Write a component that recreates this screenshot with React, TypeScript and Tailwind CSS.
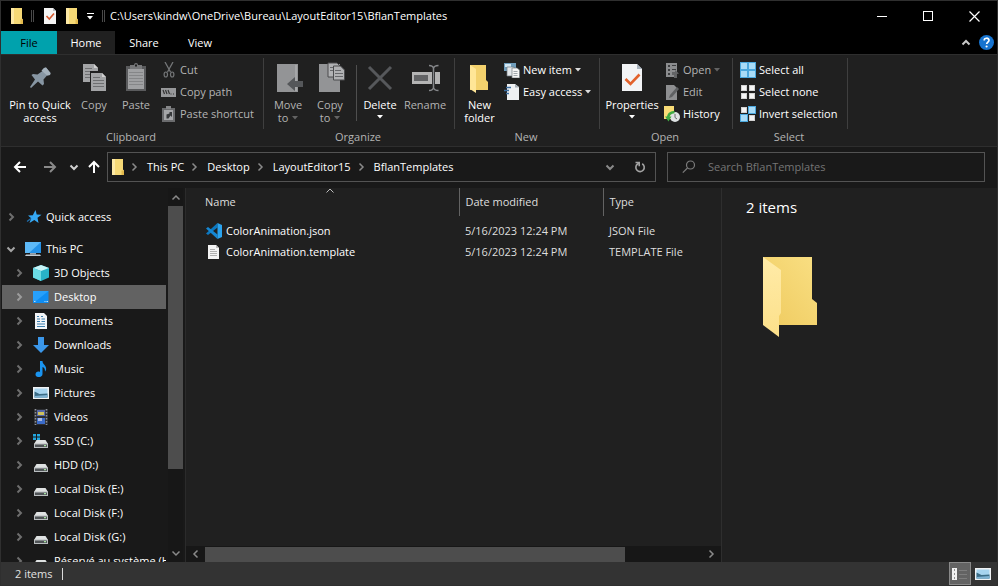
import type { ReactNode } from "react";

/* ---------- icons ---------- */

type Dir = "up" | "down" | "left" | "right";

const chevronPaths: Record<Dir, string> = {
  up: "M1.5 6.5L5 3l3.5 3.5",
  down: "M1.5 3.5L5 7l3.5-3.5",
  left: "M6.5 1.5L3 5l3.5 3.5",
  right: "M3.5 1.5L7 5 3.5 8.5",
};

function Chevron({ dir, className = "text-[#8a8a8a]", stroke = 2 }: { dir: Dir; className?: string; stroke?: number }) {
  return (
    <svg width="10" height="10" viewBox="0 0 10 10" className={`shrink-0 ${className}`} fill="none" stroke="currentColor" strokeWidth={stroke}>
      <path d={chevronPaths[dir]} />
    </svg>
  );
}

function Caret({ className = "text-white" }: { className?: string }) {
  return (
    <svg width="6" height="4" viewBox="0 0 6 4" className={`shrink-0 ${className}`} fill="currentColor">
      <path d="M0 0h6L3 3.5z" />
    </svg>
  );
}

function SmallFolder() {
  return (
    <svg width="12" height="16" viewBox="2 0 12 16" className="shrink-0">
      <path d="M2 0h11v10.5l1 1V16H2z" fill="#f6d976" />
      <path d="M2 0h3v16H2z" fill="#fde9a5" />
      <path d="M11.5 11.5H14V16h-2.5z" fill="#e3b94d" />
    </svg>
  );
}

function SmallCheckDoc() {
  return (
    <svg width="12" height="16" viewBox="2 0 12 16" className="shrink-0">
      <path d="M2 0h9l3 3v13H2z" fill="#f4f4f4" />
      <path d="M11 0v3h3z" fill="#b9bec4" />
      <path d="M4.5 8l2.8 3L12 5.5" fill="none" stroke="#d6592f" strokeWidth="1.6" />
    </svg>
  );
}

function BigIcon({ children }: { children: ReactNode }) {
  return (
    <svg width="32" height="32" viewBox="0 0 32 32" className="shrink-0">
      {children}
    </svg>
  );
}

function SmallIcon({ children }: { children: ReactNode }) {
  return (
    <svg width="16" height="16" viewBox="0 0 16 16" className="shrink-0">
      {children}
    </svg>
  );
}

const pinIcon = (
  <BigIcon>
    <path d="M20 6l2-.5L26.5 11l-.5 2-3 .5-3.500 4 .5 4.500-1.500 1.500-4.500-4L7 26l-1-1 5-7.500L7.500 13 9 12l4.500.5 5-3.500z" fill="#8796a3" />
    <path d="M20 6l2-.5L26.500 11l-.5 2-3 .5-5.500-5 1-1z" fill="#a4b1bc" />
  </BigIcon>
);

const page = (x: number, y: number) => (
  <g transform={`translate(${x} ${y})`}>
    <path d="M0 0h11l4 4v14H0z" fill="#a3a4a6" />
    <path d="M11 0v4h4z" fill="#d0d0d0" />
    <path d="M2 4.500h7M2 7.500h11M2 10.500h11M2 13.500h11" stroke="#6e6f71" />
  </g>
);

const copyIcon = (
  <BigIcon>
    {page(5, 2)}
    <path d="M12 9h13l4 5v16H12z" fill="#202020" />
    {page(13, 11)}
  </BigIcon>
);

const pasteIcon = (
  <BigIcon>
    <path d="M6 4h20v25H6z" fill="#5a5b5d" />
    <path d="M8 7h16v20H8z" fill="#a0a1a3" />
    <path d="M10 3h4a2 2 0 0 1 4 0h4v4H10z" fill="#77787a" />
    <path d="M15 2.500h2v2h-2z" fill="#202020" />
    <path d="M9 10.500h14M9 13.500h14M9 16.500h14M9 19.500h14M9 22.500h14" stroke="#858688" />
  </BigIcon>
);

const moveIcon = (
  <BigIcon>
    <path d="M5 2h21v28H5z" fill="#939496" />
    <path d="M23 3h2v26h-2z" fill="#a5a6a8" />
    <path d="M15 22l8-7v4h8v6h-8v4z" fill="#55575a" />
  </BigIcon>
);

const copyToIcon = (
  <BigIcon>
    <path d="M5 2h21v28H5z" fill="#939496" />
    <path d="M14 1h9l3 3v11H14z" fill="#b0b1b3" stroke="#4a4b4d" />
    <path d="M16 5.500h7M16 8.500h7" stroke="#66676a" />
    <path d="M19.500 4h7l4 4v10h-11z" fill="#b0b1b3" stroke="#4a4b4d" />
    <path d="M21 8.500h6M21 11.500h8M21 14.500h8" stroke="#66676a" />
  </BigIcon>
);

const deleteIcon = (
  <BigIcon>
    <path d="M5 5l22 22M27 5L5 27" stroke="#56585b" strokeWidth="3" />
  </BigIcon>
);

const renameIcon = (
  <BigIcon>
    <path d="M3 10h20v12H3zM26 10h5v12h-5z" fill="#b4b4b4" />
    <path d="M5 13h14v6H5z" fill="#626365" />
    <path d="M20 3.500q4 0 4.500 3 .5-3 5-3M24.500 6v21M20 28.500q4 0 4.500-3 .5 3 5 3" fill="none" stroke="#85878a" strokeWidth="1.500" />
  </BigIcon>
);

const newFolderIcon = (
  <BigIcon>
    <path d="M6 3h16v15l2 2v8H6z" fill="#f3d16d" />
    <path d="M6 3l6 4v24l-6-4z" fill="#ffe697" />
  </BigIcon>
);

const propertiesIcon = (
  <BigIcon>
    <path d="M6 2h15l5 5v22H6z" fill="#f2f4f6" />
    <path d="M21 2v5h5z" fill="#a9b4bf" />
    <path d="M9.500 17l5 5 9-9.500" fill="none" stroke="#e2622c" strokeWidth="2.600" />
  </BigIcon>
);

const cutIcon = (
  <SmallIcon>
    <path d="M4 0l5.500 10M12 0L6.500 10" stroke="#747678" strokeWidth="1.300" />
    <g fill="none" stroke="#747678" strokeWidth="1.200">
      <ellipse cx="4.800" cy="12.500" rx="1.700" ry="2.500" />
      <ellipse cx="11.200" cy="12.500" rx="1.700" ry="2.500" />
    </g>
  </SmallIcon>
);

const copyPathIcon = (
  <SmallIcon>
    <path d="M0 4h15v9H0z" fill="#97989a" />
    <path d="M2 6l1.500 4M4.500 6L6 10M7 6l1.500 4M9.500 10h1M12 10h1" stroke="#333" strokeWidth="1.200" />
  </SmallIcon>
);

const pasteShortcutIcon = (
  <SmallIcon>
    <path d="M1 2h13v14H1z" fill="#6a6b6d" />
    <path d="M3 4h9v10H3z" fill="#a5a6a8" />
    <path d="M5 0h5v3H5z" fill="#858688" />
    <path d="M5.500 12.500V8.500l3-1V6H11v5l-1.500-1.500L7.500 12.500z" fill="#37393b" />
  </SmallIcon>
);

const newItemIcon = (
  <SmallIcon>
    <path d="M0 1h12v8H0z" fill="#6f9dbb" />
    <path d="M1 2h6v3H1z" fill="#d3e7f3" />
    <path d="M3 5h7v9H3z" fill="#e4e8ec" stroke="#747c83" strokeWidth=".7" />
    <path d="M8 6h5l2.500 2v8H8z" fill="#f6f6f6" stroke="#747c83" strokeWidth=".7" />
    <path d="M9.500 9.500h4M9.500 11.500h4M9.500 13.500h4" stroke="#8d959c" strokeWidth=".8" />
  </SmallIcon>
);

const easyAccessIcon = (
  <SmallIcon>
    <path d="M3 0h8l4 3v13H3z" fill="#eef0f2" />
    <path d="M11 0v3.500h4z" fill="#a4adb5" />
    <path d="M2 3.500h5M0 6.500h5M2 9.500h3" stroke="#3c6ea0" strokeWidth="1.300" />
  </SmallIcon>
);

const openIcon = (
  <SmallIcon>
    <path d="M2 1h11v14H2z" fill="#8b8c8e" />
    <path d="M4 3h2v2H4zM4 7h2v2H4zM4 11h2v2H4zM8 3h4v1H8zM8 7h4v1H8z" fill="#3c3d3f" />
    <path d="M8 10h3V8l4 3.500-2 .5v4h-3v-3H8z" fill="#626365" />
  </SmallIcon>
);

const editIcon = (
  <SmallIcon>
    <path d="M2 1h8l3 3v12H2z" fill="#8e8f91" />
    <path d="M5 14l1-3 7-8 2 2-7 8z" fill="#5f6163" />
  </SmallIcon>
);

const historyIcon = (
  <SmallIcon>
    <path d="M0 0h10v13H0z" fill="#f9dc77" />
    <circle cx="11" cy="11" r="5" fill="#dfe3e4" />
    <path d="M11 8v3.500l2 1.500" fill="none" stroke="#666" strokeWidth="1" />
    <path d="M4 12.500q0-6 6.500-6.500" fill="none" stroke="#3faa42" strokeWidth="2.600" />
    <path d="M1 10.500h6.500l-3 5z" fill="#3faa42" />
  </SmallIcon>
);

const squares = [
  [0, 0],
  [8, 0],
  [0, 8],
  [8, 8],
];

function SelectIcon({ on }: { on: boolean[] }) {
  return (
    <SmallIcon>
      {squares.map(([x, y], i) =>
        on[i] ? (
          <rect key={i} x={x + 0.5} y={y + 0.5} width="7" height="7" fill="#a9dcf8" stroke="#4ba8de" />
        ) : (
          <rect key={i} x={x + 1.5} y={y + 1.5} width="5" height="5" fill="#f5f5f5" stroke="#d2d2d2" />
        ),
      )}
    </SmallIcon>
  );
}

const starIcon = (
  <SmallIcon>
    <path d="M9.500 1l1.200 4.500 4.800.3-4 2.900 1 5.300-4.200-3L3.500 14l1.700-4.800L2 6.500l4.800-.3z" fill="#35a9f5" />
    <path d="M1 12.500l4-3" stroke="#1f6fae" strokeWidth="1.300" />
  </SmallIcon>
);

const pcIcon = (
  <SmallIcon>
    <path d="M0 1h16v11H0z" fill="#2492e8" />
    <path d="M0 1h16L4 12H0z" fill="#5db9f7" />
    <path d="M5 12h6v1.500H5z" fill="#98a5b0" />
    <path d="M1 13.500h14l1 1.500H0z" fill="#c3ccd3" />
  </SmallIcon>
);

const cubeIcon = (
  <SmallIcon>
    <path d="M8 0l8 3v9.500L8 16l-8-3.500V3z" fill="#28b2c8" />
    <path d="M8 0l8 3-8 3-8-3z" fill="#c9f4f7" />
    <path d="M0 3l8 3v10l-8-3.500z" fill="#6bdbe4" />
  </SmallIcon>
);

const desktopIcon = (
  <SmallIcon>
    <path d="M0 2h15.500v12H0z" fill="#0f8df2" />
    <path d="M0 2h15.500L3 12H0z" fill="#27a0fb" />
    <path d="M1 12.500h14" stroke="#bfe1fb" strokeDasharray="1.500 9 1 1" />
  </SmallIcon>
);

const documentsIcon = (
  <SmallIcon>
    <path d="M2 0h9l3 3v13H2z" fill="#f3f5f7" />
    <path d="M4 3.500h2M8 3.500h2M4 6h3M8.500 6H12M4 8.500h3M8.500 8.500H12M4 11h8M4 13.500h8" stroke="#3c7fae" strokeWidth="1.200" />
  </SmallIcon>
);

const downloadsIcon = (
  <SmallIcon>
    <path d="M5 0h6v8h5l-8 8-8-8h5z" fill="#3b97ea" />
  </SmallIcon>
);

const musicIcon = (
  <SmallIcon>
    <path d="M7 0h2.500c0 4 4.500 4 3.500 9-.2.8-1 1.500-1 1.500 0-3-1-4-2.500-4.500V13c0 4-7 4-7 .5C2.500 11 5 10 7 11z" fill="#1a94f0" />
  </SmallIcon>
);

const picturesIcon = (
  <SmallIcon>
    <path d="M0 2h16v12H0z" fill="#f0f2f4" />
    <path d="M1.500 3.500h13v9h-13z" fill="#a7d4ef" />
    <path d="M1.500 6.500l5 2.500 8-.5v4h-13z" fill="#3b6c86" />
    <path d="M1.500 11l13-1v2.500h-13z" fill="#7fb3d4" />
  </SmallIcon>
);

const videosIcon = (
  <SmallIcon>
    <path d="M1 0h14v16H1z" fill="#2c2e33" />
    <path d="M2.500 0v16M13.500 0v16" stroke="#8d9095" strokeWidth="1.500" strokeDasharray="1.500 1.500" />
    <path d="M4 1h8v6H4z" fill="#5667a8" />
    <path d="M5 3h6v3H5z" fill="#cfc15c" />
    <path d="M4 9h8v6H4z" fill="#3b6bc9" />
    <path d="M5 9h4v3H5z" fill="#a9b8dd" />
  </SmallIcon>
);

const diskBody = (
  <>
    <path d="M3.500 7h9L15 11H1z" fill="#dfe2e2" />
    <path d="M1 10.500h14V15H1z" fill="#b9bdbf" />
    <path d="M2 11.500h12V14H2z" fill="#4f5356" />
    <path d="M11 12h2v1.200h-2z" fill="#a6e3a0" />
  </>
);

const diskIcon = <SmallIcon>{diskBody}</SmallIcon>;

const systemDiskIcon = (
  <SmallIcon>
    {diskBody}
    <path d="M0 1h3v2.500H0zM4 1h3v2.500H4zM0 4.500h3V7H0zM4 4.500h3V7H4z" fill="#22a7e0" />
  </SmallIcon>
);

const vscodeIcon = (
  <SmallIcon>
    <path d="M11.500 0v4.500L2 12 0 10.500z" fill="#0c78c0" />
    <path d="M0 5.500L2 4l9.500 7.500V16z" fill="#1587d3" />
    <path d="M11.500 0L16 2v12l-4.500 2z" fill="#2ba3ee" />
  </SmallIcon>
);

const textFileIcon = (
  <SmallIcon>
    <path d="M2 1h8l3 3v11H2z" fill="#f4f4f4" />
    <path d="M10 1v3h3z" fill="#bdbdbd" />
    <path d="M4 5.500h5M4 7.500h7M4 9.500h7M4 11.500h7" stroke="#a8a8a8" strokeWidth=".9" />
  </SmallIcon>
);

/* ---------- data ---------- */

const places = [
  { name: "3D Objects", icon: cubeIcon },
  { name: "Desktop", icon: desktopIcon, selected: true },
  { name: "Documents", icon: documentsIcon },
  { name: "Downloads", icon: downloadsIcon },
  { name: "Music", icon: musicIcon },
  { name: "Pictures", icon: picturesIcon },
  { name: "Videos", icon: videosIcon },
  { name: "SSD (C:)", icon: systemDiskIcon },
  { name: "HDD (D:)", icon: diskIcon },
  { name: "Local Disk (E:)", icon: diskIcon },
  { name: "Local Disk (F:)", icon: diskIcon },
  { name: "Local Disk (G:)", icon: diskIcon },
  { name: "Réservé au système (H:)", icon: diskIcon },
];

const crumbs = ["This PC", "Desktop", "LayoutEditor15", "BflanTemplates"];

const files = [
  { name: "ColorAnimation.json", date: "5/16/2023 12:24 PM", type: "JSON File", icon: vscodeIcon },
  { name: "ColorAnimation.template", date: "5/16/2023 12:24 PM", type: "TEMPLATE File", icon: textFileIcon },
];

/* ---------- title bar and tabs ---------- */

function TitleBar() {
  return (
    <header className="flex h-[30px] shrink-0 items-center bg-black pl-[10px] text-white">
      <SmallFolder />
      <span className="mx-2 h-3 w-[3px] border-x border-[#4a4a4a]" />
      <button aria-label="Properties" className="ml-[2px]">
        <SmallCheckDoc />
      </button>
      <button aria-label="New folder" className="ml-[10px]">
        <SmallFolder />
      </button>
      <button aria-label="Customize Quick Access Toolbar" className="ml-2 flex w-2 flex-col items-center gap-[2px]">
        <span className="h-px w-[7px] bg-white" />
        <Caret />
      </button>
      <span className="mr-[5px] ml-2 h-3 w-[3px] border-x border-[#4a4a4a]" />
      <h1 className="min-w-0 flex-1 truncate">
        C:\Users\kindw\OneDrive\Bureau\LayoutEditor15\BflanTemplates
      </h1>
      <button aria-label="Minimize" className="flex h-full w-[46px] items-center justify-center">
        <span className="h-px w-[10px] bg-white" />
      </button>
      <button aria-label="Maximize" className="flex h-full w-[46px] items-center justify-center">
        <span className="size-[10px] border border-white" />
      </button>
      <button aria-label="Close" className="flex h-full w-[46px] items-center justify-center">
        <svg width="11" height="11" viewBox="0 0 11 11" stroke="white" strokeWidth="1.200">
          <path d="M.5.500l10 10M10.500.500l-10 10" />
        </svg>
      </button>
    </header>
  );
}

function Tabs() {
  return (
    <nav className="flex h-[23px] shrink-0 bg-black text-white">
      <button className="w-14 bg-[#00a2ad] text-black">File</button>
      <button className="w-[58px] bg-[#202020]">Home</button>
      <button className="w-[58px]">Share</button>
      <button className="w-[54px]">View</button>
      <span className="flex-1" />
      <button aria-label="Minimize the Ribbon" className="px-2">
        <Chevron dir="up" className="text-[#c8c8c8]" />
      </button>
      <button aria-label="Help" className="mr-[3px] flex items-center">
        <svg width="15" height="15" viewBox="0 0 15 15">
          <circle cx="7.500" cy="7.500" r="7.500" fill="#1673cf" />
          <path d="M5.200 5.500c0-3 4.800-3 4.800-.2 0 1.600-2.300 1.900-2.300 3.700" fill="none" stroke="white" strokeWidth="1.700" />
          <circle cx="7.600" cy="11.500" r="1.100" fill="white" />
        </svg>
      </button>
    </nav>
  );
}

/* ---------- ribbon ---------- */

function Group({ label, className, children }: { label: string; className: string; children: ReactNode }) {
  return (
    <section aria-label={label} className={`flex shrink-0 flex-col ${className}`}>
      <div className="flex h-[71px] border-r border-[#3f3f3f]">{children}</div>
      <div className="pr-[3px] text-center leading-4 text-[#b4b4b4]">{label}</div>
    </section>
  );
}

type BigProps = { icon: ReactNode; lines: string[]; className: string; caret?: "inline" | "below"; dim?: boolean };

function BigButton({ icon, lines, className, caret, dim }: BigProps) {
  return (
    <button className={`flex shrink-0 flex-col items-center pt-1 leading-[13px] whitespace-nowrap ${dim ? "text-[#b4b4b4]" : "text-white"} ${className}`}>
      {icon}
      <span className="mt-1">{lines[0]}</span>
      {lines[1] && (
        <span className="flex items-center gap-1">
          {lines[1]}
          {caret === "inline" && <Caret className="text-[#636363]" />}
        </span>
      )}
      {caret === "below" && (
        <span className="pt-1">
          <Caret />
        </span>
      )}
    </button>
  );
}

function SmallButton({ icon, label, caret, dim }: { icon: ReactNode; label: string; caret?: boolean; dim?: boolean }) {
  return (
    <button className={`flex h-[22px] items-center gap-[3px] whitespace-nowrap ${dim ? "text-[#b4b4b4]" : "text-white"}`}>
      {icon}
      {label}
      {caret && <Caret className={dim ? "text-[#636363]" : "text-[#dcdcdc]"} />}
    </button>
  );
}

function Ribbon() {
  return (
    <div className="flex shrink-0 border-t border-b border-[#2e2e2e] bg-[#202020] pt-[3px] pb-px">
      <Group label="Clipboard" className="w-[263px]">
        <BigButton icon={pinIcon} lines={["Pin to Quick", "access"]} className="w-[76px] pl-[2px]" />
        <BigButton icon={copyIcon} lines={["Copy"]} className="w-[34px]" dim />
        <BigButton icon={pasteIcon} lines={["Paste"]} className="w-[50px]" dim />
        <div className="pt-px">
          <SmallButton icon={cutIcon} label="Cut" dim />
          <SmallButton icon={copyPathIcon} label="Copy path" dim />
          <SmallButton icon={pasteShortcutIcon} label="Paste shortcut" dim />
        </div>
      </Group>
      <Group label="Organize" className="w-[191px]">
        <BigButton icon={moveIcon} lines={["Move", "to"]} caret="inline" className="w-12" dim />
        <BigButton icon={copyToIcon} lines={["Copy", "to"]} caret="inline" className="w-9" dim />
        <span className="mt-[7px] ml-[8px] h-14 w-px bg-[#4f4f4f]" />
        <BigButton icon={deleteIcon} lines={["Delete"]} caret="below" className="w-[46px]" />
        <BigButton icon={renameIcon} lines={["Rename"]} className="w-[44px]" dim />
      </Group>
      <Group label="New" className="w-[145px]">
        <BigButton icon={newFolderIcon} lines={["New", "folder"]} className="w-[49px]" />
        <div className="pt-px">
          <SmallButton icon={newItemIcon} label="New item" caret />
          <SmallButton icon={easyAccessIcon} label="Easy access" caret />
        </div>
      </Group>
      <Group label="Open" className="w-[133px]">
        <BigButton icon={propertiesIcon} lines={["Properties"]} caret="below" className="w-16" />
        <div className="pt-px">
          <SmallButton icon={openIcon} label="Open" caret dim />
          <SmallButton icon={editIcon} label="Edit" dim />
          <SmallButton icon={historyIcon} label="History" />
        </div>
      </Group>
      <Group label="Select" className="w-[115px]">
        <div className="pt-px pl-[7px]">
          <SmallButton icon={<SelectIcon on={[true, true, true, true]} />} label="Select all" />
          <SmallButton icon={<SelectIcon on={[false, false, false, false]} />} label="Select none" />
          <SmallButton icon={<SelectIcon on={[false, true, true, false]} />} label="Invert selection" />
        </div>
      </Group>
    </div>
  );
}

/* ---------- address row ---------- */

const arrowPaths = {
  Back: "M13 7H2M7 2L2 7l5 5",
  Forward: "M1 7h11M7 2l5 5-5 5",
  Up: "M7 13V2M2 7l5-5 5 5",
};

function NavArrow({ name, className }: { name: keyof typeof arrowPaths; className: string }) {
  return (
    <button aria-label={name} className={className}>
      <svg width="14" height="14" viewBox="0 0 14 14" fill="none" stroke="currentColor" strokeWidth="2">
        <path d={arrowPaths[name]} />
      </svg>
    </button>
  );
}

function AddressRow() {
  return (
    <div className="flex shrink-0 items-center bg-[#191919] px-3 pt-[5px] pb-[6px] text-white">
      <NavArrow name="Back" className="text-white" />
      <NavArrow name="Forward" className="ml-4 text-[#8a8a8a]" />
      <button aria-label="Recent locations" className="ml-3">
        <Chevron dir="down" className="text-[#d0d0d0]" />
      </button>
      <NavArrow name="Up" className="ml-2 text-white" />
      <div className="ml-[6px] flex h-[30px] min-w-0 flex-1 items-center border border-[#535353] pl-1">
        <SmallFolder />
        {crumbs.map((crumb) => (
          <span key={crumb} className="flex items-center whitespace-nowrap">
            <Chevron dir="right" stroke={1.5} className="mr-2 ml-[5px] text-[#8a8a8a]" />
            <button>{crumb}</button>
          </span>
        ))}
        <span className="flex-1" />
        <button aria-label="Previous locations" className="pr-[10px] pl-3">
          <Chevron dir="down" />
        </button>
        <button aria-label="Refresh" className="flex w-[30px] items-center justify-center self-stretch">
          <svg width="12" height="12" viewBox="0 0 12 12" fill="none" stroke="#a2a2a2" strokeWidth="1.600">
            <path d="M8.200 2.800a4.200 4.200 0 1 1-4.600.2L5 1.800" />
            <path d="M1.500 1.500h3.700v3.700" />
          </svg>
        </button>
      </div>
      <label className="ml-[11px] flex h-[30px] w-[318px] items-center border border-[#535353]">
        <svg width="14" height="14" viewBox="0 0 14 14" className="mr-3 ml-[14px] shrink-0" fill="none" stroke="#7c7c7c" strokeWidth="1.200">
          <circle cx="8.500" cy="5" r="4" />
          <path d="M5.500 8L.8 12.700" />
        </svg>
        <input
          aria-label="Search BflanTemplates"
          placeholder="Search BflanTemplates"
          className="min-w-0 flex-1 bg-transparent outline-none placeholder:text-[#757575]"
        />
      </label>
    </div>
  );
}

/* ---------- panes ---------- */

function Sidebar() {
  return (
    <aside className="flex w-[185px] shrink-0 border-r border-[#2b2b2b] bg-[#191919] text-white">
      <ul className="min-w-0 flex-1 overflow-hidden pt-[17px] pl-px">
        <li className="mb-2">
          <button className="flex h-6 items-center pl-1">
            <Chevron dir="right" className="text-[#6e6e6e]" />
            <span className="mr-1 ml-[10px]">{starIcon}</span>
            Quick access
          </button>
        </li>
        <li>
          <button className="flex h-6 items-center pl-1">
            <Chevron dir="down" className="text-[#a5a5a5]" />
            <span className="mr-[5px] ml-[9px]">{pcIcon}</span>
            This PC
          </button>
        </li>
        {places.map((place) => (
          <li key={place.name}>
            <button className={`flex h-6 w-full items-center pl-3 whitespace-nowrap ${place.selected ? "bg-[#626262]" : ""}`}>
              <Chevron dir="right" className={place.selected ? "text-[#9c9c9c]" : "text-[#6e6e6e]"} />
              <span className="mr-[5px] ml-[9px] shrink-0">{place.icon}</span>
              {place.name}
            </button>
          </li>
        ))}
      </ul>
      <div className="mr-[2px] ml-[2px] flex w-[15px] shrink-0 flex-col items-center justify-between bg-[#171717] pt-[5px] pb-1">
        <Chevron dir="up" stroke={1.5} />
        <div className="mt-[3px] mb-auto h-[72%] w-full bg-[#4d4d4d]" />
        <Chevron dir="down" stroke={1.5} />
      </div>
    </aside>
  );
}

function FileList() {
  return (
    <main className="flex min-w-0 flex-1 flex-col bg-[#202020]">
      <table className="w-full table-fixed border-collapse text-left">
        <colgroup>
          <col className="w-[273px]" />
          <col className="w-36" />
          <col />
        </colgroup>
        <thead>
          <tr className="h-7 text-[#dedede]">
            <th scope="col" className="relative border-r border-[#636363] pl-[19px] font-normal">
              Name
              <span className="absolute -top-[2px] left-[139px]">
                <Chevron dir="up" stroke={1} className="text-[#bdbdbd]" />
              </span>
            </th>
            <th scope="col" className="border-r border-[#636363] pl-[6px] font-normal">Date modified</th>
            <th scope="col" className="pl-[6px] font-normal">Type</th>
          </tr>
        </thead>
        <tbody className="before:block before:h-1">
          {files.map((file) => (
            <tr key={file.name} className="h-[21px]">
              <td className="pl-5 text-white">
                <span className="flex items-center gap-1">
                  {file.icon}
                  {file.name}
                </span>
              </td>
              <td className="pl-[6px] text-[#dedede]">{file.date}</td>
              <td className="pl-[6px] text-[#dedede]">{file.type}</td>
            </tr>
          ))}
        </tbody>
      </table>
      <div className="mt-auto flex h-4 items-center justify-between bg-[#171717] px-[5px]">
        <Chevron dir="left" stroke={1.5} />
        <div className="mr-auto ml-1 h-[15px] w-[80%] bg-[#4d4d4d]" />
        <Chevron dir="right" stroke={1.5} />
      </div>
    </main>
  );
}

function DetailsPane() {
  return (
    <aside className="w-[276px] shrink-0 border-l border-[#2e2e2e] bg-[#202020] pt-[9px] pl-6 text-white">
      <h2 className="text-[15px] leading-5">2 items</h2>
      <svg width="56" height="82" viewBox="0 0 56 82" className="mt-[39px] ml-4">
        <defs>
          <linearGradient id="folderBack" x1="0" y1="1" x2="1" y2="0">
            <stop offset="0" stopColor="#efca5e" />
            <stop offset="1" stopColor="#f9df83" />
          </linearGradient>
          <linearGradient id="folderFront" x1="0" y1="0" x2="0" y2="1">
            <stop offset="0" stopColor="#ffeba8" />
            <stop offset="1" stopColor="#fce08a" />
          </linearGradient>
        </defs>
        <path d="M1 1h49v42l5 4v22H1z" fill="url(#folderBack)" />
        <path d="M1 1l18 13v43l-2 3v21L1 69z" fill="url(#folderFront)" />
      </svg>
    </aside>
  );
}

function StatusBar() {
  return (
    <footer className="flex h-[23px] shrink-0 items-center bg-[#333] pl-[14px] text-[#e2e2e2]">
      2 items
      <span className="ml-[10px] h-3 w-px bg-[#dadada]" />
      <span className="flex-1" />
      <button aria-label="Details view" className="flex h-full w-[22px] items-center justify-center border border-[#8a8a8a] bg-[#636363]">
        <svg width="16" height="14" viewBox="0 0 16 14">
          <path d="M0 1h5v4H0zM0 5h5v4H0zM0 9h5v4H0z" fill="#f2f2f2" />
          <path d="M2 2.500h1v1H2zM2 6.500h1v1H2zM2 10.500h1v1H2z" fill="#333" />
          <path d="M7 3.500h8M7 7.500h8M7 11.500h8" stroke="#7d7d7d" />
        </svg>
      </button>
      <button aria-label="Large icons view" className="mr-[6px] ml-1">
        {picturesIcon}
      </button>
    </footer>
  );
}

export default function App() {
  return (
    <div className="flex h-screen flex-col overflow-hidden border border-[#2f2f2f] bg-[#191919] font-['Open_Sans',sans-serif] text-[11px] leading-4">
      <TitleBar />
      <Tabs />
      <Ribbon />
      <AddressRow />
      <div className="flex min-h-0 flex-1">
        <Sidebar />
        <FileList />
        <DetailsPane />
      </div>
      <StatusBar />
    </div>
  );
}
